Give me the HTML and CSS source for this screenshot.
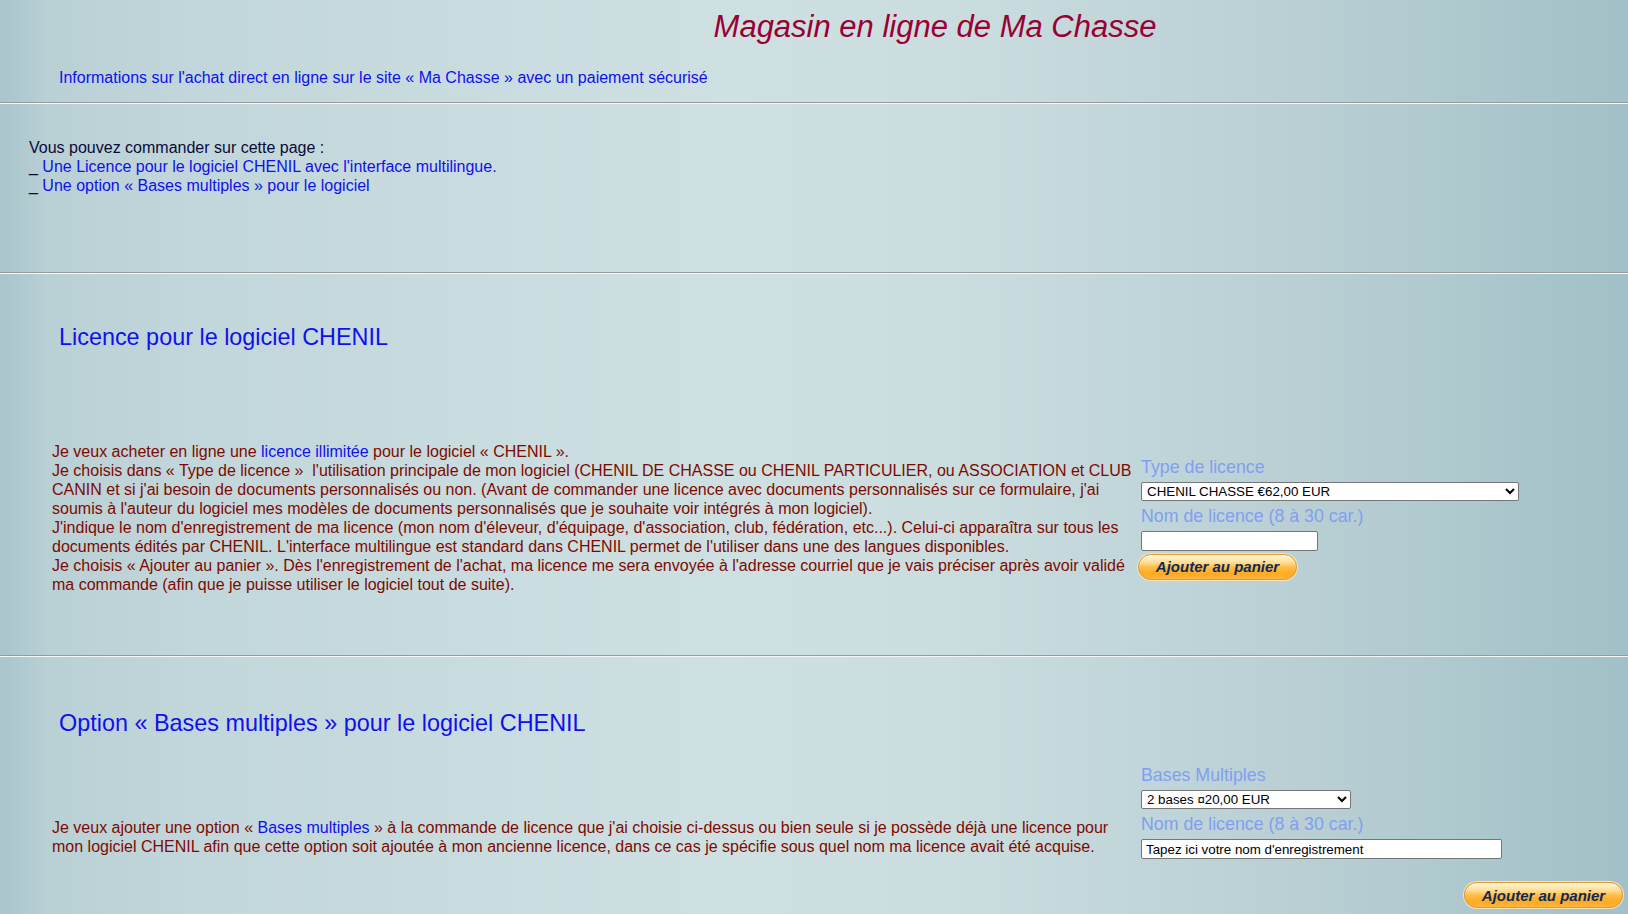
FILE: index.html
```html
<!DOCTYPE html>
<html lang="fr">
<head>
<meta charset="utf-8">
<title>Magasin en ligne de Ma Chasse</title>
<link rel="stylesheet" href="styles.css">
</head>
<body>
<header class="masthead">
  <h1 class="site-title">Magasin en ligne de Ma Chasse</h1>
  <p class="info"><a href="#">Informations sur l'achat direct en ligne sur le site « Ma Chasse » avec un paiement sécurisé</a></p>
</header>
<hr class="rule">
<section class="summary">
  <p>Vous pouvez commander sur cette page :<br>
  _ <a href="#licence">Une Licence pour le logiciel CHENIL avec l'interface multilingue.</a><br>
  _ <a href="#bases">Une option « Bases multiples » pour le logiciel</a></p>
</section>
<hr class="rule">
<section class="product product-licence" id="licence">
  <h2 class="product-title">Licence pour le logiciel CHENIL</h2>
  <div class="product-row">
    <p class="product-desc">Je veux acheter en ligne une <a href="#">licence illimitée</a> pour le logiciel « CHENIL ».<br>
    Je choisis dans « Type de licence »&nbsp; l'utilisation principale de mon logiciel (CHENIL DE CHASSE ou CHENIL PARTICULIER, ou ASSOCIATION et CLUB CANIN et si j'ai besoin de documents personnalisés ou non. (Avant de commander une licence avec documents personnalisés sur ce formulaire, j'ai soumis à l'auteur du logiciel mes modèles de documents personnalisés que je souhaite voir intégrés à mon logiciel).<br>
    J'indique le nom d'enregistrement de ma licence (mon nom d'éleveur, d'équipage, d'association, club, fédération, etc...). Celui-ci apparaîtra sur tous les documents édités par CHENIL. L'interface multilingue est standard dans CHENIL permet de l'utiliser dans une des langues disponibles.<br>
    Je choisis « Ajouter au panier ». Dès l'enregistrement de l'achat, ma licence me sera envoyée à l'adresse courriel que je vais préciser après avoir validé ma commande (afin que je puisse utiliser le logiciel tout de suite).</p>
    <form class="order" action="#">
      <label class="field-label" for="type">Type de licence</label>
      <select class="field-select select-wide" id="type">
        <option>CHENIL CHASSE €62,00 EUR</option>
        <option>CHENIL PARTICULIER €62,00 EUR</option>
        <option>ASSOCIATION et CLUB CANIN €62,00 EUR</option>
      </select>
      <label class="field-label" for="nom1">Nom de licence (8 à 30 car.)</label>
      <input class="field-input input-short" id="nom1" type="text">
      <div class="actions">
        <button class="cart-btn" type="button">Ajouter au panier</button>
      </div>
    </form>
  </div>
</section>
<hr class="rule">
<section class="product product-bases" id="bases">
  <h2 class="product-title">Option « Bases multiples » pour le logiciel CHENIL</h2>
  <div class="product-row row-bases">
    <p class="product-desc">Je veux ajouter une option « <a href="#">Bases multiples</a> » à la commande de licence que j'ai choisie ci-dessus ou bien seule si je possède déjà une licence pour mon logiciel CHENIL afin que cette option soit ajoutée à mon ancienne licence, dans ce cas je spécifie sous quel nom ma licence avait été acquise.</p>
    <form class="order" action="#">
      <label class="field-label" for="bases-sel">Bases Multiples</label>
      <select class="field-select select-medium" id="bases-sel">
        <option>2 bases ¤20,00 EUR</option>
        <option>3 bases ¤30,00 EUR</option>
      </select>
      <label class="field-label" for="nom2">Nom de licence (8 à 30 car.)</label>
      <input class="field-input input-long" id="nom2" type="text" value="Tapez ici votre nom d'enregistrement">
      <div class="actions actions-right">
        <button class="cart-btn" type="button">Ajouter au panier</button>
      </div>
    </form>
  </div>
</section>
</body>
</html>
```

FILE: styles.css
```css
html {
  overflow: hidden;
}

body {
  margin: 0;
  min-height: 100vh;
  font-family: "Liberation Sans", Arial, sans-serif;
  font-size: 16px;
  line-height: 19px;
  color: #0a0a3a;
  background: linear-gradient(to right,
    #a9c5cd 0%,
    #b9d0d5 3%,
    #c2d7db 12%,
    #c9dcdf 30%,
    #cfe0e2 45%,
    #cbdddf 58%,
    #c1d6da 70%,
    #b9cfd4 80%,
    #b0cacf 88%,
    #a7c4ca 95%,
    #a2c0c7 100%);
}

a {
  color: #1010ee;
  text-decoration: none;
}

p {
  margin: 0;
}

.masthead {
  padding: 9px 0 15px 0;
}

.site-title {
  margin: 0;
  padding-left: 242px;
  text-align: center;
  font-size: 31px;
  line-height: 36px;
  font-weight: normal;
  font-style: italic;
  color: #990033;
}

.info {
  margin-top: 23px;
  padding-left: 59px;
}

.rule {
  margin: 0;
  height: 0;
  border: 0;
  border-top: 1px solid #9a9a9a;
  border-bottom: 1px solid #f4f7f7;
}

.summary {
  padding: 34px 0 77px 29px;
}

.product {
  padding-top: 49px;
  padding-bottom: 61px;
}

.product-bases {
  padding-top: 52px;
  padding-bottom: 0;
}

.product-title {
  margin: 0;
  padding-left: 59px;
  font-size: 23.4px;
  line-height: 28px;
  font-weight: normal;
  color: #1010ee;
}

.product-row {
  display: flex;
  align-items: center;
  margin-top: 91px;
  padding-left: 52px;
}

.row-bases {
  margin-top: 28px;
}

.product-desc {
  width: 1086px;
  flex: none;
  color: #7d0a00;
}

.order {
  display: flex;
  flex-direction: column;
  align-items: flex-start;
  flex: 1;
  margin-left: 3px;
  padding-right: 5px;
}

.field-label {
  font-size: 17.8px;
  line-height: 20px;
  color: #829ff0;
}

.field-label + .field-input,
.field-label + .field-select {
  margin-top: 5px;
}

.field-select + .field-label {
  margin-top: 5px;
}

.field-select {
  height: 19px;
  padding: 0 1px;
  font-family: "Liberation Sans", Arial, sans-serif;
  font-size: 13.33px;
  color: #000;
  background: #fff;
  border: 1px solid #767676;
  border-radius: 2px;
}

.select-wide {
  width: 378px;
}

.select-medium {
  width: 210px;
}

.field-input {
  margin-top: 4px;
  height: 20px;
  box-sizing: border-box;
  padding: 0 4px;
  font-family: "Liberation Sans", Arial, sans-serif;
  font-size: 13.33px;
  color: #000;
  background: #fff;
  border: 1px solid #767676;
  border-radius: 2px;
}

.input-short {
  width: 177px;
}

.input-long {
  width: 361px;
}

.actions {
  margin-top: 3px;
  margin-left: -3px;
}

.actions-right {
  align-self: stretch;
  margin-top: 23px;
  margin-left: 0;
  text-align: right;
}

.cart-btn {
  width: 159px;
  height: 26px;
  padding: 0;
  border-radius: 13px;
  border: 1px solid #e9962a;
  background: linear-gradient(to bottom,
    #fff6d8 0%,
    #ffdf98 30%,
    #ffbd45 52%,
    #ffaa20 78%,
    #ffb640 100%);
  box-shadow: inset 0 1px 0 #fffbe9, 0 0 0 1px #fbe2b4;
  font-family: "Liberation Sans", Arial, sans-serif;
  font-size: 15px;
  font-weight: bold;
  font-style: italic;
  color: #0b2a5c;
  cursor: pointer;
}
```
